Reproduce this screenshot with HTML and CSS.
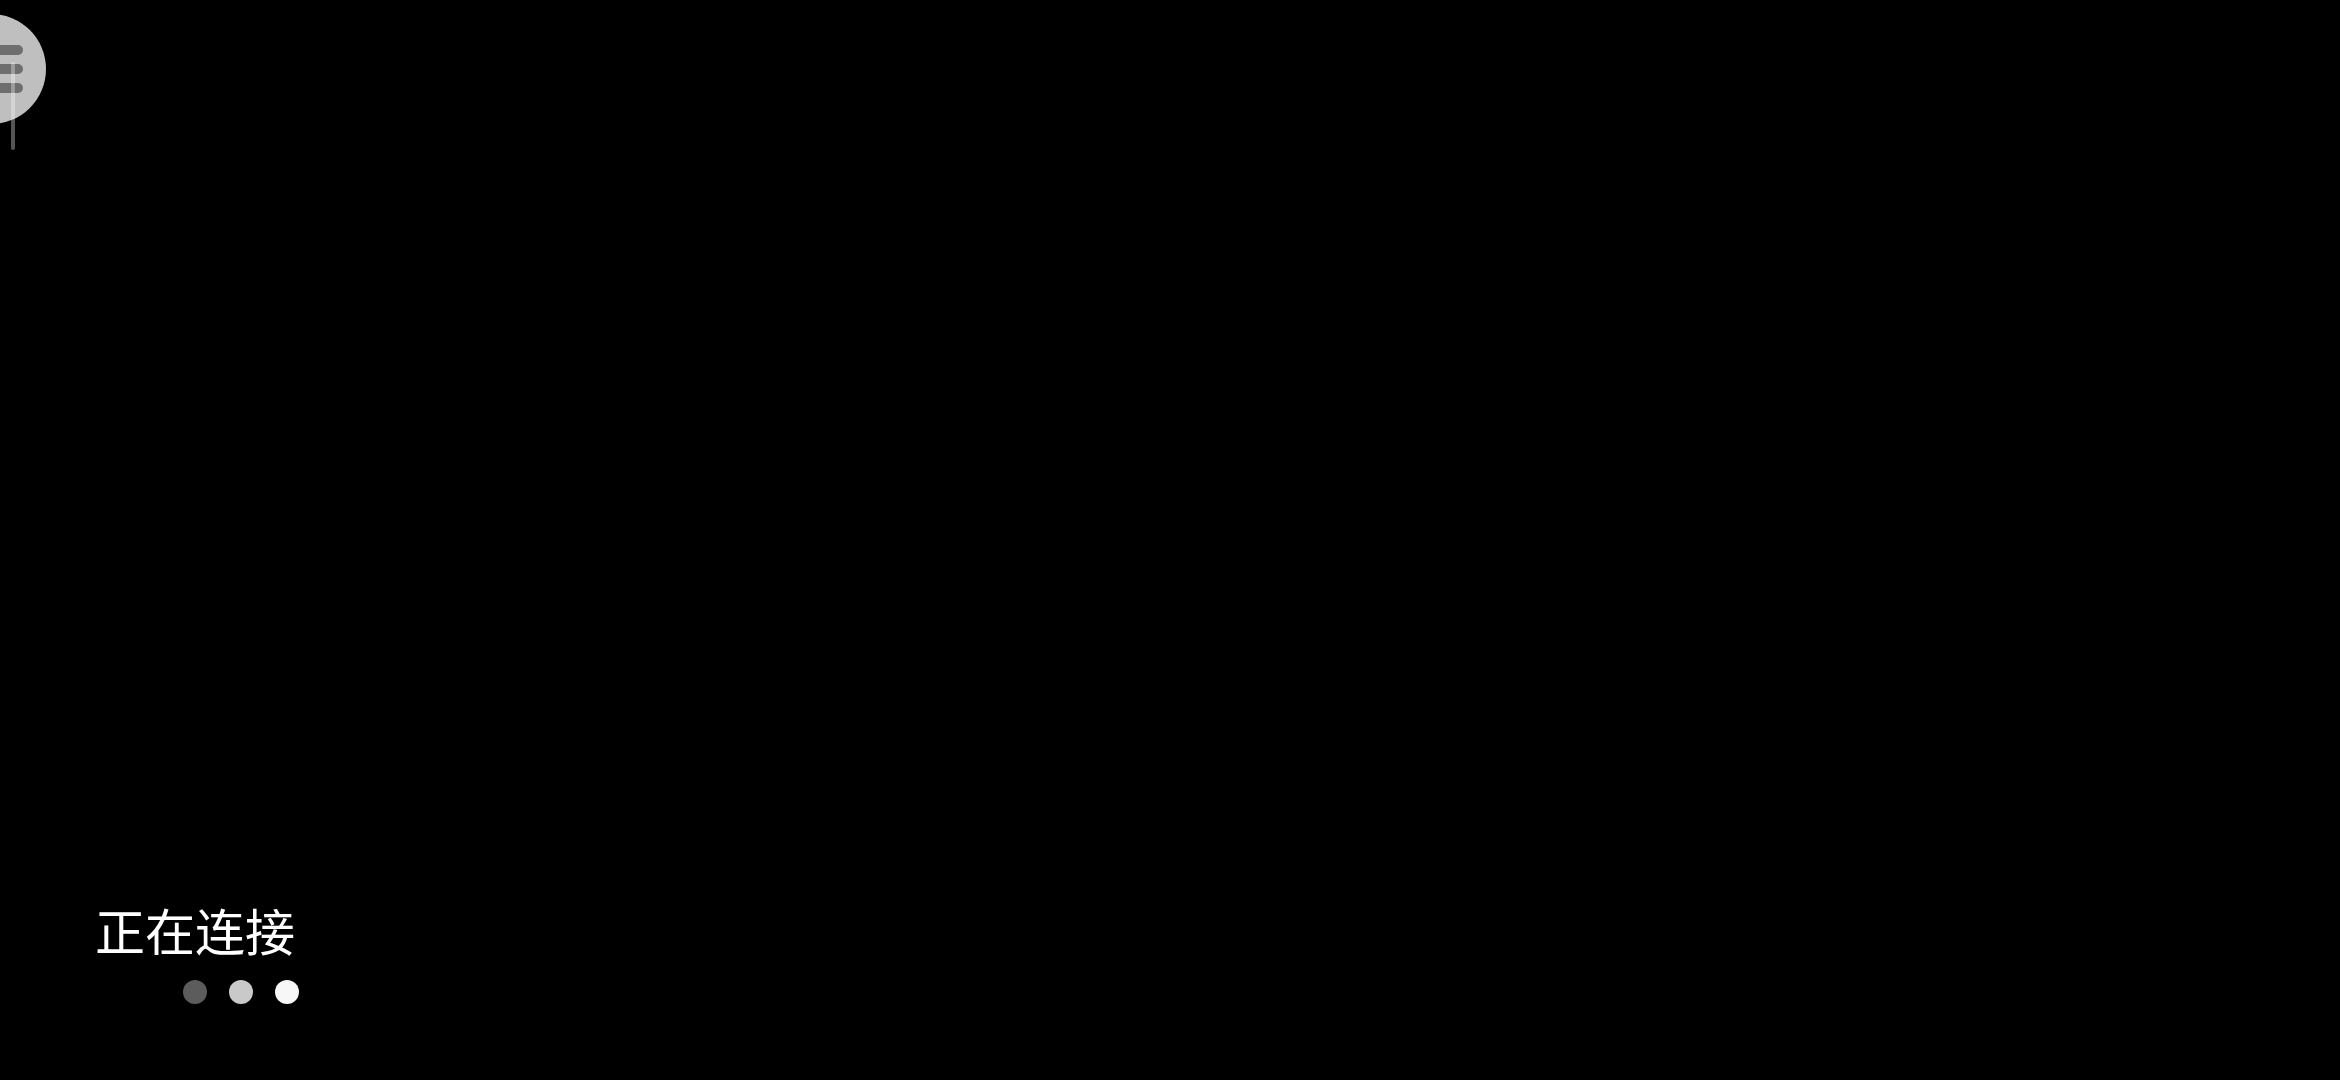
FILE: index.html
```html
<!DOCTYPE html>
<html lang="zh">
<head>
<meta charset="utf-8">
<title>正在连接</title>
<link rel="stylesheet" href="styles.css">
</head>
<body>
<div class="float-ball">
  <span class="ball-line"></span>
  <span class="ball-bar"></span>
  <span class="ball-bar"></span>
  <span class="ball-bar"></span>
</div>
<main class="screen">
  <div class="status">
    <div class="status-text">正在连接</div>
    <div class="dots">
      <span class="dot dot-1"></span>
      <span class="dot dot-2"></span>
      <span class="dot dot-3"></span>
    </div>
  </div>
</main>
</body>
</html>
```

FILE: styles.css
```css
html, body {
  margin: 0;
  padding: 0;
  background: #000;
  width: 2340px;
  height: 1080px;
  overflow: hidden;
}

body {
  font-family: "Noto Sans CJK SC", "Noto Sans", sans-serif;
  color: #fff;
}

.screen {
  height: 1080px;
  display: flex;
  flex-direction: column;
  justify-content: flex-end;
  padding: 0 0 76px 95px;
  box-sizing: border-box;
}

.status {
  width: fit-content;
  display: flex;
  flex-direction: column;
}

.status-text {
  font-size: 50px;
  line-height: 50px;
  letter-spacing: 0;
}

.dots {
  display: flex;
  justify-content: flex-end;
  gap: 22px;
  margin-top: 26px;
  margin-right: -4px;
}

.dot {
  width: 24px;
  height: 24px;
  border-radius: 50%;
  display: block;
}

.dot-1 { background: #5c5c5c; }
.dot-2 { background: #c9c9c9; }
.dot-3 { background: #f7f7f7; }

/* floating assistive ball, overlaps the screen edge */
.float-ball {
  position: absolute;
  left: -64px;
  top: 14px;
  width: 110px;
  height: 110px;
  border-radius: 50%;
  background: #bfbfbf;
  display: flex;
  flex-direction: column;
  align-items: flex-end;
  padding: 31px 23px 0 0;
  box-sizing: border-box;
  gap: 9px;
}

.ball-bar {
  display: block;
  width: 60px;
  height: 10px;
  border-radius: 5px;
  background: #6e6e6e;
  position: relative;
  z-index: 1;
}

.ball-line {
  position: absolute;
  left: 75px;
  top: 48px;
  width: 4px;
  height: 88px;
  border-radius: 2px;
  background: rgba(255, 255, 255, 0.33);
  z-index: 2;
}
```
